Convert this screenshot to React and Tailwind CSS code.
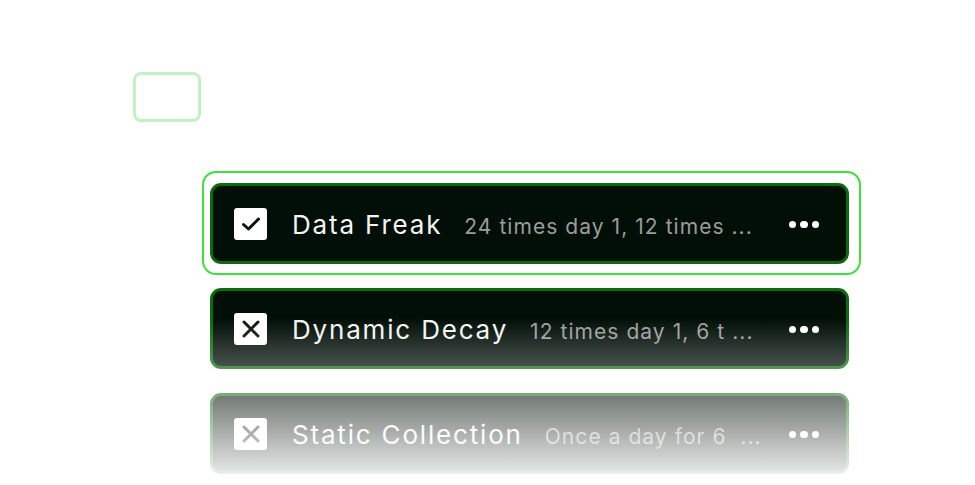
import React from "react";

const items = [
  { title: "Data Freak", sub: "24 times day 1, 12 times ...", checked: true },
  { title: "Dynamic Decay", sub: "12 times day 1, 6 t ...", checked: false },
  { title: "Static Collection", sub: "Once a day for 6  ...", checked: false },
];

function Check() {
  return (
    <svg width="24" height="24" viewBox="0 0 24 24" fill="none">
      <path d="M4.5 12.5 L9.5 17 L19.5 7" stroke="#07120b" strokeWidth="3" strokeLinecap="round" strokeLinejoin="round" />
    </svg>
  );
}

function Cross() {
  return (
    <svg width="24" height="24" viewBox="0 0 24 24" fill="none">
      <path d="M5 5 L19 19 M19 5 L5 19" stroke="#07120b" strokeWidth="3" strokeLinecap="round" />
    </svg>
  );
}

function Card({ item, first }) {
  return (
    <div className="relative w-[639px]">
      {first && (
        <div className="pointer-events-none absolute left-[-8px] right-[-12px] top-[-12px] bottom-[-11px] rounded-[14px] border-2 border-[#3ae23a]" />
      )}
      <div className="flex h-[81px] w-[639px] items-center rounded-[11px] border-[3px] border-[#0a6c0a] bg-[#010f07] pl-[21px] pr-[27px]">
        <div className="flex h-[32px] w-[33px] shrink-0 items-center justify-center rounded-[3px] bg-white">
          {item.checked ? <Check /> : <Cross />}
        </div>
        <div className="ml-[25px] mt-[3px] flex items-baseline">
          <div className="whitespace-nowrap text-[26px] leading-none tracking-[0.07em] text-[#f4f4f4]">
            {item.title}
          </div>
          <div className="ml-[22px] whitespace-pre text-[21px] leading-none tracking-[0.05em] text-[#9c9c9c]">
            {item.sub}
          </div>
        </div>
        <div className="ml-auto mt-[2px] flex items-center gap-[4px]">
          <span className="block h-[7.5px] w-[7.5px] rounded-full bg-white" />
          <span className="block h-[7.5px] w-[7.5px] rounded-full bg-white" />
          <span className="block h-[7.5px] w-[7.5px] rounded-full bg-white" />
        </div>
      </div>
    </div>
  );
}

export default function App() {
  return (
    <div className="relative h-[485px] w-[975px] overflow-hidden bg-white font-['Inter',sans-serif]">
      <div className="pl-[133px] pt-[72px]">
        <div className="h-[50px] w-[68px] rounded-[8px] border-[3px] border-[#c2f1c2]" />
      </div>
      <div className="ml-[210px] mt-[61px] flex flex-col items-start gap-[24px]">
        {items.map((it, i) => (
          <Card key={i} item={it} first={i === 0} />
        ))}
      </div>
      <div className="pointer-events-none absolute inset-x-0 top-[318px] bottom-0 bg-[linear-gradient(to_bottom,rgba(255,255,255,0),rgba(255,255,255,0.97))]" />
    </div>
  );
}
